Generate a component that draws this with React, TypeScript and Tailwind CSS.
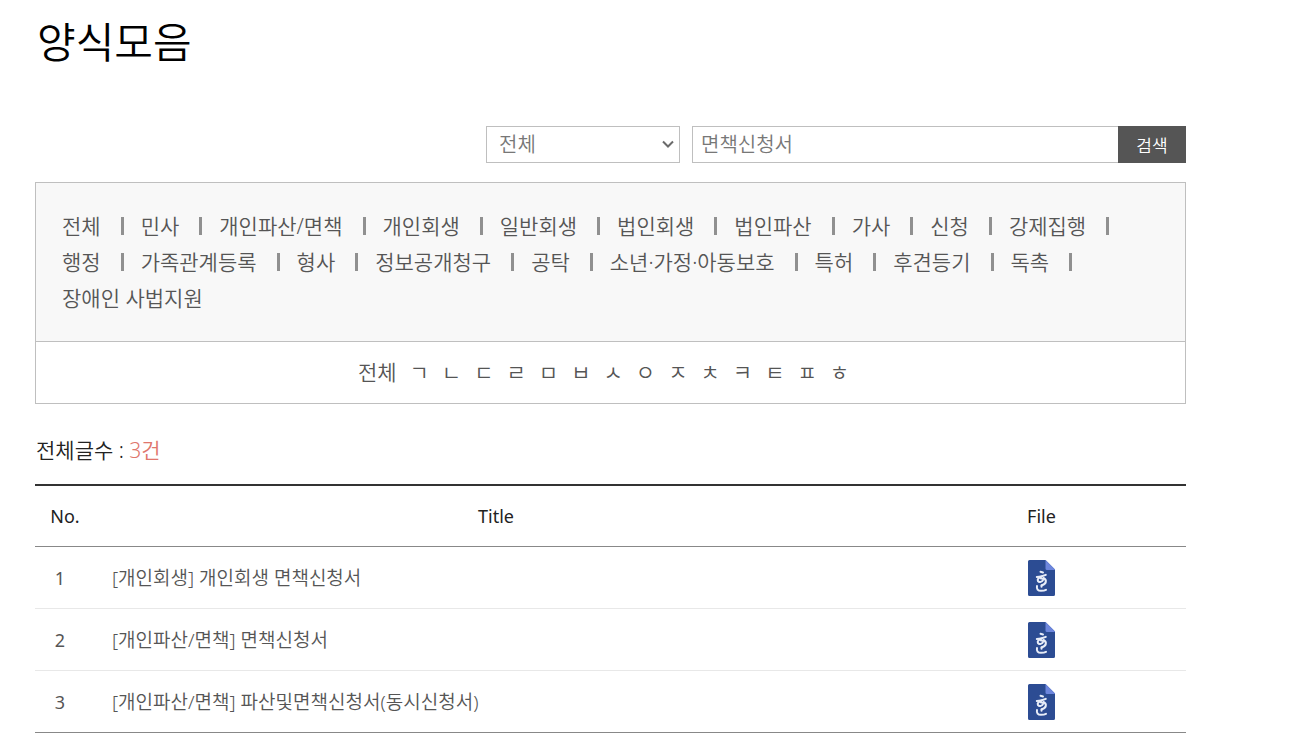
const categoryRows = [
  [
    "전체",
    "민사",
    "개인파산/면책",
    "개인회생",
    "일반회생",
    "법인회생",
    "법인파산",
    "가사",
    "신청",
    "강제집행",
  ],
  [
    "행정",
    "가족관계등록",
    "형사",
    "정보공개청구",
    "공탁",
    "소년·가정·아동보호",
    "특허",
    "후견등기",
    "독촉",
  ],
  ["장애인 사법지원"],
];

const categories = categoryRows.flat();

const initials = "ㄱㄴㄷㄹㅁㅂㅅㅇㅈㅊㅋㅌㅍㅎ".split("");

const forms = [
  { no: 1, title: "[개인회생] 개인회생 면책신청서" },
  { no: 2, title: "[개인파산/면책] 면책신청서" },
  { no: 3, title: "[개인파산/면책] 파산및면책신청서(동시신청서)" },
];

function HwpIcon() {
  return (
    <svg width="27" height="36" viewBox="0 0 27 36" fill="none" aria-hidden="true">
      <path
        d="M1.5 0H17.5L27 9.5v25a1.5 1.5 0 0 1-1.5 1.5h-24A1.5 1.5 0 0 1 0 34.5v-33A1.5 1.5 0 0 1 1.5 0Z"
        fill="#2c4c93"
      />
      <path d="M17.5 0L27 9.5V10h-8a1.5 1.5 0 0 1-1.5-1.500Z" fill="#6d86dd" />
      <g stroke="#e8edf8" strokeWidth="2" strokeLinecap="round" strokeLinejoin="round">
        <path d="M12.500 11.800l2.500.7" />
        <path d="M8.800 17c3.200 0 6-.8 9-2.200" />
        <path d="M13.500 16.500c-3 1-4.500 3-3.500 4.700 1.200 1.600 4.500.6 5-1.200.3-1.200-.8-1.800-2-1.500" />
        <path d="M15.500 18c3.500 1.800 3.200 5.800-1.500 7.200" />
        <path d="M13.500 25.200v1.500" />
        <path d="M9 26c-.6 3 .8 4.800 4 4.800 2.200 0 3.800-.3 5-1" />
      </g>
    </svg>
  );
}

function SearchForm() {
  return (
    <form className="flex justify-end" onSubmit={(e) => e.preventDefault()}>
      <div className="relative mr-3 w-[194px]">
        <select
          aria-label="분류"
          defaultValue="all"
          className="h-[37px] w-full appearance-none border border-[#bfbfbf] bg-white pl-3 text-[20px] leading-7 text-[#777]"
        >
          <option value="all">전체</option>
          <option value="title">제목</option>
        </select>
        <svg
          className="pointer-events-none absolute top-3.5 right-1.5"
          width="12"
          height="9"
          viewBox="0 0 12 9"
          fill="none"
          aria-hidden="true"
        >
          <path d="M1 1.500l5 5 5-5" stroke="#6b6b6b" strokeWidth="2" />
        </svg>
      </div>
      <input
        type="text"
        aria-label="검색어"
        defaultValue="면책신청서"
        className="h-[37px] w-[426px] border border-r-0 border-[#bfbfbf] bg-white pb-0.5 pl-2 text-[20px] text-[#777]"
      />
      <button type="submit" className="h-[37px] w-[68px] bg-[#555] pt-0.5 text-[17px] text-white">
        검색
      </button>
    </form>
  );
}

function CategoryBox() {
  return (
    <div className="mt-[19px] border border-[#bfbfbf] text-[21px] leading-9 text-[#555]">
      <ul className="flex flex-wrap border-b border-[#bfbfbf] bg-[#f8f8f8] pt-[25px] pr-[56px] pb-[25px] pl-[26px]">
        {categories.map((name, i) => (
          <li key={name} className="flex items-center">
            <a href="#">{name}</a>
            {i < categories.length - 1 && (
              <span className="mr-[17px] ml-5 h-[18px] w-[3px] bg-[#909090]" />
            )}
          </li>
        ))}
      </ul>
      <ul className="flex justify-center gap-[13px] pt-3 pr-[14px] pb-[13px]">
        <li>
          <a href="#">전체</a>
        </li>
        {initials.map((letter) => (
          <li key={letter}>
            <a href="#">{letter}</a>
          </li>
        ))}
      </ul>
    </div>
  );
}

function FormTable() {
  return (
    <table className="mt-5 w-full border-collapse border-t-2 border-b border-t-[#333] border-b-[#888] text-[19px] leading-7 text-[#555]">
      <colgroup>
        <col className="w-[60px]" />
        <col />
        <col className="w-[289px]" />
      </colgroup>
      <thead>
        <tr className="h-[61px] border-b border-[#888] text-[18px] text-[#222]">
          <th className="font-normal">No.</th>
          <th className="font-normal">Title</th>
          <th className="font-normal">File</th>
        </tr>
      </thead>
      <tbody>
        {forms.map((form) => (
          <tr key={form.no} className="h-[62px] border-b border-[#e8e8e8] last:border-[#888]">
            <td className="pt-0.5 pr-2.5 text-center text-[18px] font-normal">{form.no}</td>
            <td className="pt-0.5 pl-[17px]">
              <a href="#">{form.title}</a>
            </td>
            <td className="pt-0.5">
              <a href="#" aria-label="한글 파일 다운로드" className="flex justify-center">
                <HwpIcon />
              </a>
            </td>
          </tr>
        ))}
      </tbody>
    </table>
  );
}

export default function App() {
  return (
    <main className="bg-white pr-[104px] pb-[18px] pl-[35px] font-['Noto_Sans','Noto_Sans_CJK_KR',sans-serif] font-[350]">
      <h1 className="pt-3 pl-0.5 text-[42px] leading-[60px] font-[350] text-black">양식모음</h1>
      <div className="mt-[54px]">
        <SearchForm />
      </div>
      <CategoryBox />
      <p className="mt-8 pl-px text-[21px] leading-7 text-[#222]">
        전체글수 : <span className="text-[#e0766c]">3건</span>
      </p>
      <FormTable />
    </main>
  );
}
